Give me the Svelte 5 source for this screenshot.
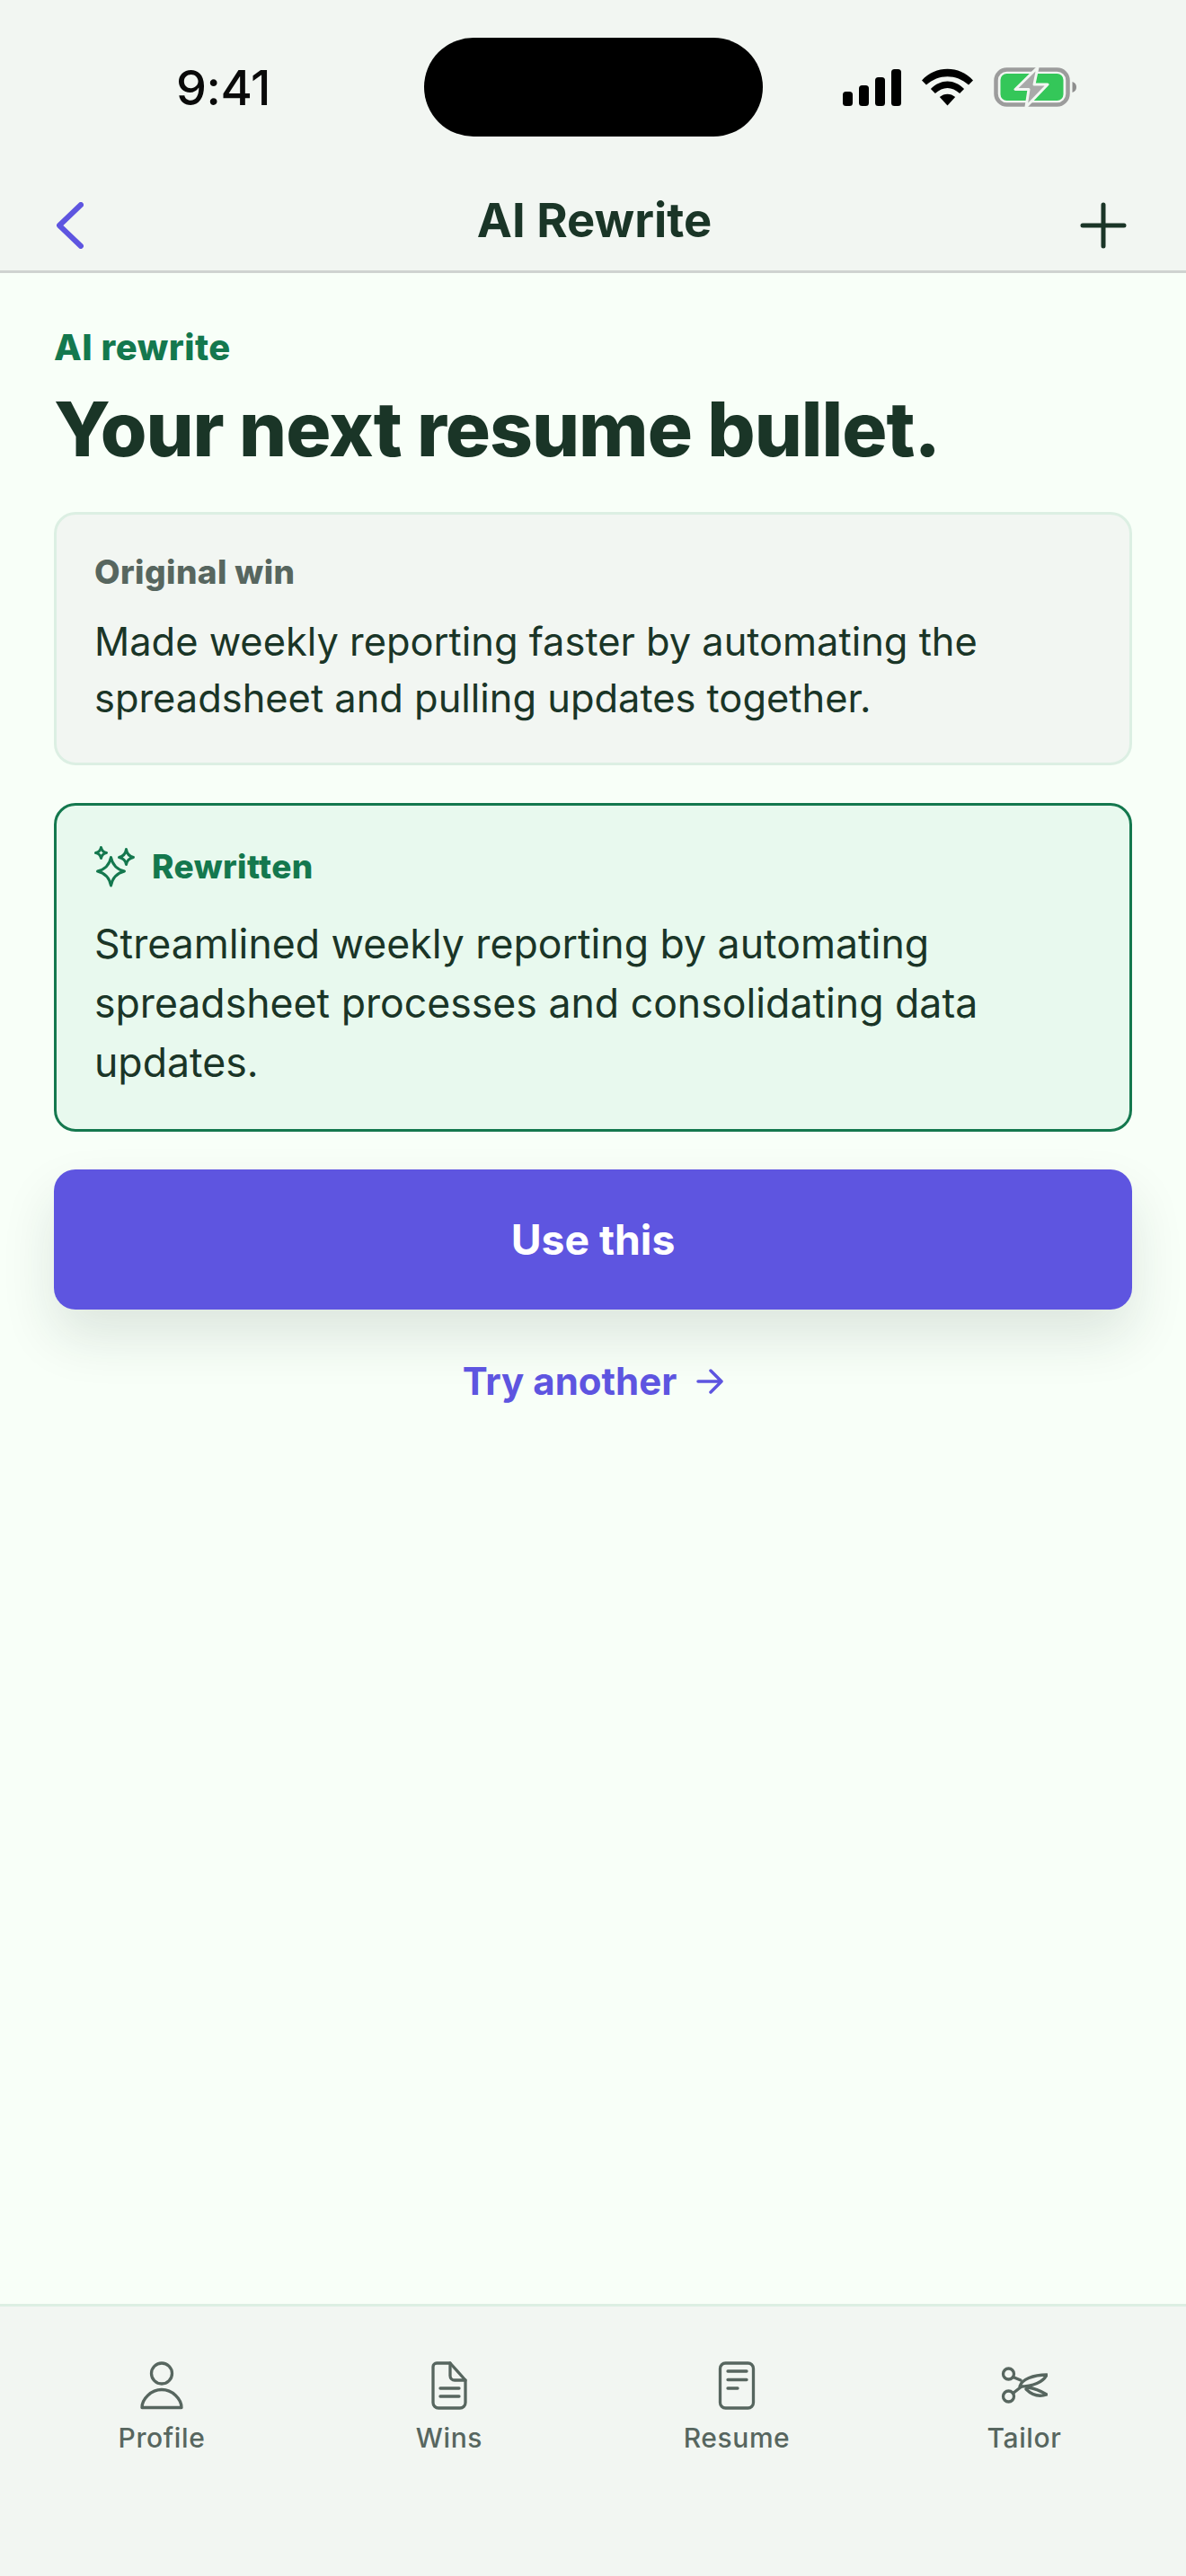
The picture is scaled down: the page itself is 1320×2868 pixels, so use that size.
<script>
	const tabs = ['Profile', 'Wins', 'Resume', 'Tailor'];
</script>

<div class="screen">
	<header class="top">
		<div class="status">
			<span class="time">9:41</span>
			<div class="island"></div>
			<div class="status-icons">
				<svg width="65" height="41" viewBox="0 0 65 41" fill="#000">
					<rect x="0" y="25" width="11" height="16" rx="3.500" />
					<rect x="18" y="18" width="11" height="23" rx="3.500" />
					<rect x="36" y="9" width="11" height="32" rx="3.500" />
					<rect x="54" y="0" width="11" height="41" rx="3.500" />
				</svg>
				<svg width="57" height="42" viewBox="0 0 46 42" preserveAspectRatio="none" fill="#000">
					<path d="M0 13.500C12-3.500 34-3.500 46 13.500L42 18.500C31 6 15 6 4 18.500Z" />
					<path d="M8 23C17 11.500 29 11.500 38 23L34 28C27 20 19 20 12 28Z" />
					<path d="M16 32C20 27.500 26 27.500 30 32L23 41.500Z" />
				</svg>
				<svg width="93" height="46" viewBox="0 0 93 46">
					<rect x="2.500" y="3.500" width="80" height="39" rx="12" fill="none" stroke="#9c9c9c" stroke-width="4.500" />
					<rect x="7.500" y="8" width="70" height="30" rx="7" fill="#34c759" />
					<path d="M87.500 17C90.500 18 92 20 92 23C92 26 90.500 28 87.500 29Z" fill="#8e8e8e" />
					<path d="M49 1L24 25.500H39L36 45L60 20H45Z" fill="#a9a9a9" stroke="#f2f6f2" stroke-width="3" stroke-linejoin="round" />
				</svg>
			</div>
		</div>
		<nav class="nav">
			<svg class="back" width="30" height="52" viewBox="0 0 30 52" fill="none" stroke="#5e55e0" stroke-width="6" stroke-linecap="round" stroke-linejoin="round">
				<path d="M27 3L3 26L27 49" />
			</svg>
			<h1>AI Rewrite</h1>
			<svg class="plus" width="52" height="52" viewBox="0 0 52 52" fill="none" stroke="#1a3527" stroke-width="5" stroke-linecap="round">
				<path d="M26 3V49M3 26H49" />
			</svg>
		</nav>
	</header>

	<main class="content">
		<div class="eyebrow">AI rewrite</div>
		<h2>Your next resume bullet.</h2>

		<section class="card original">
			<div class="card-label">Original win</div>
			<p>Made weekly reporting faster by automating the spreadsheet and pulling updates together.</p>
		</section>

		<section class="card rewritten">
			<div class="card-label">
				<svg width="46" height="46" viewBox="0 0 46 46" fill="none" stroke="#14784e" stroke-width="3" stroke-linejoin="round">
					<path d="M18.500 12.500Q21 25 33.500 28Q21 31 18.500 44Q16 31 3.500 28Q16 25 18.500 12.500Z" />
					<path d="M7.500 1.500Q8.500 6.500 13.500 7.500Q8.500 8.500 7.500 13.500Q6.500 8.500 1.500 7.500Q6.500 6.500 7.500 1.500Z" />
					<path d="M35.500 3.500Q36.500 11 43.500 12.500Q36.500 14 35.500 20.500Q34.500 14 27.500 12.500Q34.500 11 35.500 3.500Z" />
				</svg>
				<span>Rewritten</span>
			</div>
			<p>Streamlined weekly reporting by automating spreadsheet processes and consolidating data updates.</p>
		</section>

		<button class="primary">Use this</button>

		<div class="secondary">
			<span>Try another</span>
			<svg width="30" height="30" viewBox="0 0 30 30" fill="none" stroke="#5e55e0" stroke-width="3.500" stroke-linecap="round" stroke-linejoin="round">
				<path d="M2 15H28M16 3L28 15L16 27" />
			</svg>
		</div>
	</main>

	<footer class="tabs">
		{#each tabs as tab}
			<div class="tab">
				<svg width="52" height="54" viewBox="0 0 52 54" fill="none" stroke="#57665f" stroke-width="3.300" stroke-linecap="round" stroke-linejoin="round">
					{#if tab === 'Profile'}
						<circle cx="26" cy="13.500" r="11.500" />
						<path d="M4 51.500C4 42 14 31.500 26 31.500C38 31.500 48 42 48 51.500Z" />
					{:else if tab === 'Wins'}
						<path d="M12 2H27L44 21V46A6 6 0 0 1 38 52H14A6 6 0 0 1 8 46V6A4 4 0 0 1 12 2Z" />
						<path d="M27 2V16A5 5 0 0 0 32 21H44M16 30H37M16 39H37" />
					{:else if tab === 'Resume'}
						<rect x="7.500" y="2" width="37" height="50" rx="6" />
						<path d="M16 11H37M16 20.500H37M16 30H27" />
					{:else}
						<circle cx="8.500" cy="14" r="6" />
						<circle cx="8.500" cy="39" r="6" />
						<path d="M13.500 17.500L22 21M13.500 35.500L23 28" />
						<path d="M21 28C23 20 36 15 51 15C47 23 36 28 21 28Z" />
						<path d="M30 29C38 30 46 34 51 37C42 40 34 37 28 31Z" />
					{/if}
				</svg>
				<span>{tab}</span>
			</div>
		{/each}
	</footer>
</div>

<style>
	:global(body) {
		margin: 0;
		background: #f8fff8;
	}

	.screen {
		width: 1320px;
		height: 2868px;
		display: flex;
		flex-direction: column;
		font-family: Inter, 'Liberation Sans', sans-serif;
		color: #1a3527;
		overflow: hidden;
	}

	.top {
		height: 301px;
		flex: none;
		background: #f2f6f2;
		border-bottom: 3px solid #cfd3d0;
		display: flex;
		flex-direction: column;
	}

	.status {
		height: 196px;
		padding-top: 42px;
		box-sizing: border-box;
		display: grid;
		grid-template-columns: 472px 377px 1fr;
		align-items: start;
	}

	.time {
		justify-self: start;
		margin: 29px 0 0 196px;
		font-size: 54px;
		line-height: 54px;
		font-weight: 500;
		letter-spacing: -0.5px;
		color: #0a0a0a;
	}

	.island {
		height: 110px;
		background: #000;
		border-radius: 55px;
	}

	.status-icons {
		margin: 32px 0 0 89px;
		display: flex;
		gap: 23px;
		align-items: center;
		height: 46px;
	}

	.nav {
		flex: 1;
		padding: 0 60px 8px 63px;
		display: grid;
		grid-template-columns: 1fr auto 1fr;
		align-items: center;
	}

	.nav h1 {
		margin: 0;
		font-size: 52.500px;
		font-weight: 700;
	}

	.back {
		margin-top: 12px;
	}

	.plus {
		margin: 13px 6px 0 0;
		justify-self: end;
	}

	.content {
		flex: 1;
		padding: 60px 60px 0;
		display: flex;
		flex-direction: column;
	}

	.eyebrow {
		font-size: 40px;
		line-height: 46px;
		font-weight: 800;
		letter-spacing: 0.5px;
		color: #14784e;
	}

	h2 {
		margin: 20px 0 0;
		font-size: 83.700px;
		line-height: 96px;
		font-weight: 800;
		letter-spacing: -1px;
	}

	.card {
		border-radius: 24px;
		box-sizing: border-box;
		padding: 42px;
		flex: none;
	}

	.card p {
		margin: 0;
		color: #1a3527;
	}

	.card-label {
		font-size: 37px;
		line-height: 44px;
		font-weight: 800;
		letter-spacing: 0.4px;
	}

	.original {
		margin-top: 44px;
		height: 282px;
		background: #f2f6f2;
		border: 3px solid #dcefe3;
		padding-top: 42px;
	}

	.original .card-label {
		color: #57665f;
	}

	.original p {
		margin-top: 24px;
		font-size: 43.400px;
		line-height: 63px;
	}

	.rewritten {
		margin-top: 42px;
		height: 366px;
		background: #e8f9ee;
		border: 3px solid #14784e;
		padding-top: 45px;
	}

	.rewritten .card-label {
		display: flex;
		align-items: center;
		gap: 18px;
		color: #14784e;
	}

	.rewritten p {
		margin-top: 30px;
		font-size: 44.600px;
		line-height: 66px;
	}

	.primary {
		margin-top: 42px;
		height: 156px;
		flex: none;
		border: none;
		border-radius: 24px;
		background: #5e55e0;
		color: #fff;
		font: 700 46.300px Inter, 'Liberation Sans', sans-serif;
		box-shadow: 0 30px 60px rgba(26, 53, 39, 0.12);
	}

	.secondary {
		margin-top: 52px;
		display: flex;
		justify-content: center;
		align-items: center;
		gap: 22px;
		color: #5e55e0;
		font-size: 42px;
		line-height: 56px;
		font-weight: 700;
	}

	.tabs {
		height: 303px;
		flex: none;
		box-sizing: border-box;
		background: #f2f6f2;
		border-top: 3px solid #dcefe3;
		display: grid;
		grid-template-columns: repeat(4, 1fr);
		padding: 61px 20px 0;
	}

	.tab {
		display: flex;
		flex-direction: column;
		align-items: center;
		gap: 13px;
		color: #57665f;
		font-size: 30px;
		line-height: 36px;
		font-weight: 500;
		letter-spacing: 0.6px;
	}
</style>
